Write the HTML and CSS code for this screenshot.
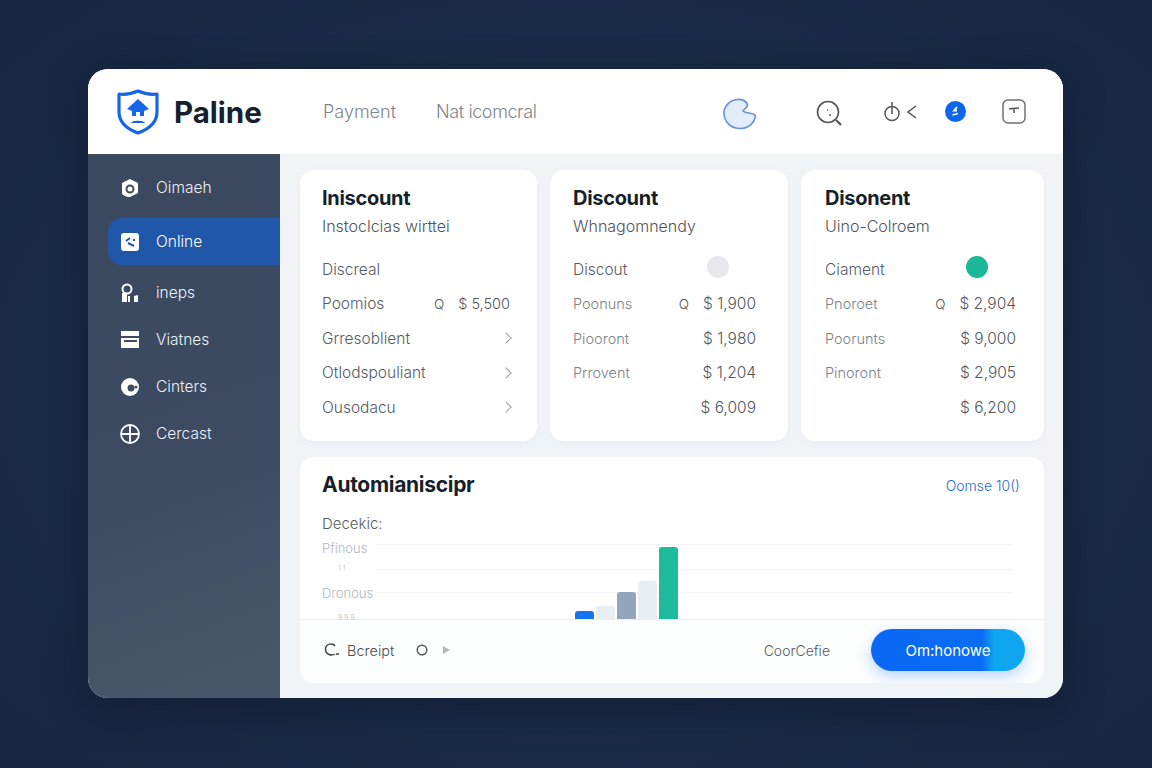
FILE: index.html
```html
<!DOCTYPE html>
<html lang="en">
<head>
    <meta charset="UTF-8">
    <meta name="viewport" content="width=device-width, initial-scale=1.0">
    <title>Paline</title>
    <link rel="stylesheet" href="styles.css">
</head>
<body>

<div class="window">
    <!-- top bar -->
    <header class="topbar">
        <svg class="logo" width="42" height="46" viewBox="0 0 42 46" fill="none">
            <path d="M21 2 C28 5 34 6 40 5 V23 C40 33 32 40 21 44 C10 40 2 33 2 23 V5 C8 6 14 5 21 2 Z" stroke="#1565e6" stroke-width="3.2" stroke-linejoin="round"/>
            <path d="M21 10 L32 20 L27 22 V27 H23 V23 H19 V27 H15 V22 L10 20 Z" fill="#1565e6"/>
            <path d="M14 34 C15 31 27 31 28 34 Z" fill="#1565e6"/>
        </svg>
        <span class="brand">Paline</span>
        <nav class="topnav">
            <a href="#">Payment</a>
            <a class="tight" href="#">Nat icomcral</a>
        </nav>
        <div class="top-icons">
            <svg class="ic-pie" width="34" height="32" viewBox="0 0 34 32">
                <path d="M14 1.500 C19 1 24 3 24.500 7.500 C24 10 21 11 20 13 C23 16 29 14 32.500 17.500 C32 25 25 30.500 17 30.500 C8 30.500 1 24 1 15 C1 8 7 2 14 1.500 Z" fill="#e3ecf9" stroke="#6a94d6" stroke-width="1.700" stroke-linejoin="round"/>
            </svg>
            <svg class="ic-search" width="28" height="26" viewBox="0 0 28 26" fill="none" stroke="#555" stroke-width="1.600">
                <circle cx="12" cy="12" r="10.500"/>
                <path d="M20 20 L25 25" stroke-width="2.200"/>
                <path d="M11 10 H12 M13 15 H15"/>
            </svg>
            <svg class="ic-power" width="34" height="22" viewBox="0 0 34 22" fill="none" stroke="#555" stroke-width="1.500">
                <circle cx="8" cy="12.500" r="7"/>
                <path d="M8 1 V13"/>
                <path d="M32 5 L24 11 L32 17"/>
            </svg>
            <svg class="ic-dot" width="21" height="21" viewBox="0 0 21 21">
                <circle cx="10.500" cy="10.500" r="10.500" fill="#0f66ea"/>
                <path d="M12 6 L9 9.500 H12 M7.500 14 L13 12.500" fill="none" stroke="#fff" stroke-width="1.800"/>
            </svg>
            <svg class="ic-box" width="24" height="25" viewBox="0 0 24 25" fill="none" stroke="#707070">
                <rect x="1" y="1" width="22" height="23" rx="5" stroke-width="1.500"/>
                <path d="M7 10 L11 9.500 L17 9 M12 9.500 V14" stroke="#555" stroke-width="1.500"/>
            </svg>
        </div>
    </header>

    <div class="body-row">
        <!-- side menu -->
        <aside class="sidebar">
            <a class="side-item" href="#">
                <svg width="20" height="20" viewBox="0 0 20 20"><path d="M10 1 L18 5 V15 L10 19 C6 19 2 17 2 15 V5 Z" fill="#fff"/><circle cx="10" cy="11" r="3.500" fill="none" stroke="#3f4d63" stroke-width="2"/></svg>
                <span>Oimaeh</span>
            </a>
            <a class="side-item active" href="#">
                <svg width="20" height="20" viewBox="0 0 20 20"><rect x="1" y="1" width="18" height="18" rx="3" fill="#fff"/><path d="M6 9 L10 6 M8 11 L14 14 M13 8 H15" stroke="#2056a8" stroke-width="2"/></svg>
                <span>Online</span>
            </a>
            <a class="side-item" href="#">
                <svg width="20" height="20" viewBox="0 0 20 20"><circle cx="7" cy="6" r="4.500" fill="none" stroke="#fff" stroke-width="2"/><path d="M2 19 V10 H7 V19 M8 19 V13 H10 V19 M14 19 V13 L18 12 V19 Z" fill="#fff"/></svg>
                <span>ineps</span>
            </a>
            <a class="side-item" href="#">
                <svg width="20" height="20" viewBox="0 0 20 20"><rect x="1" y="1" width="18" height="17" fill="#fff"/><rect x="1" y="6" width="18" height="2" fill="#3f4d63"/><rect x="4" y="10" width="13" height="2" fill="#3f4d63"/></svg>
                <span>Viatnes</span>
            </a>
            <a class="side-item" href="#">
                <svg width="20" height="20" viewBox="0 0 20 20"><circle cx="10" cy="10" r="9" fill="#fff"/><circle cx="11" cy="11" r="3.500" fill="#3f4d63"/><circle cx="16" cy="10" r="1.500" fill="#3f4d63"/></svg>
                <span>Cinters</span>
            </a>
            <a class="side-item" href="#">
                <svg width="20" height="20" viewBox="0 0 20 20" fill="none" stroke="#fff" stroke-width="1.800"><circle cx="10" cy="10" r="9"/><path d="M1 10 H19 M10 1 V19"/></svg>
                <span>Cercast</span>
            </a>
        </aside>

        <main class="content">
            <div class="cards">
                <section class="card card-first">
                    <h2>Iniscount</h2>
                    <p class="sub">Instoclcias wirttei</p>
                    <div class="row"><span>Discreal</span></div>
                    <div class="row"><span>Poomios</span><span class="q">Q</span><span class="val">$ 5,500</span></div>
                    <div class="row"><span>Grresoblient</span><i class="chev"></i></div>
                    <div class="row"><span>Otlodspouliant</span><i class="chev"></i></div>
                    <div class="row"><span>Ousodacu</span><i class="chev"></i></div>
                </section>

                <section class="card card-mid">
                    <h2>Discount</h2>
                    <p class="sub">Whnagomnendy</p>
                    <div class="row"><span>Discout</span><i class="dot grey"></i></div>
                    <div class="row faded"><span>Poonuns</span><span class="q">Q</span><span class="val">$ 1,900</span></div>
                    <div class="row faded"><span>Piooront</span><span class="val">$ 1,980</span></div>
                    <div class="row faded"><span>Prrovent</span><span class="val">$ 1,204</span></div>
                    <div class="row faded"><span></span><span class="val">$ 6,009</span></div>
                </section>

                <section class="card card-last">
                    <h2>Disonent</h2>
                    <p class="sub">Uino-Colroem</p>
                    <div class="row"><span>Ciament</span><i class="dot green"></i></div>
                    <div class="row faded"><span>Pnoroet</span><span class="q">Q</span><span class="val">$ 2,904</span></div>
                    <div class="row faded"><span>Poorunts</span><span class="val">$ 9,000</span></div>
                    <div class="row faded"><span>Pinoront</span><span class="val">$ 2,905</span></div>
                    <div class="row faded"><span></span><span class="val">$ 6,200</span></div>
                </section>
            </div>

            <section class="panel">
                <div class="panel-top">
                    <div class="panel-head">
                        <h2>Automianiscipr</h2>
                        <a href="#">Oomse 10()</a>
                    </div>
                    <p class="decek">Decekic:</p>
                    <div class="chart">
                        <div class="chart-labels">
                            <span>Pfinous</span>
                            <span class="tiny">1 1</span>
                            <span>Dronous</span>
                            <span class="tiny">9 9 9</span>
                        </div>
                        <div class="chart-lines">
                            <div class="line l1"></div>
                            <div class="line l2"></div>
                            <div class="line l3"></div>
                        </div>
                        <div class="bars">
                            <div class="bar blue" style="height: 8px"></div>
                            <div class="bar pale" style="height: 13px"></div>
                            <div class="bar slate" style="height: 27px"></div>
                            <div class="bar pale" style="height: 38px"></div>
                            <div class="bar teal" style="height: 72px"></div>
                        </div>
                    </div>
                </div>
                <div class="panel-foot">
                    <svg width="16" height="14" viewBox="0 0 16 14" fill="none" stroke="#444" stroke-width="1.500"><path d="M11 3 C9 0 2 0 1.500 6 C1.500 12 8 13 11 11 M12 11 H15"/></svg>
                    <span class="receipt">Bcreipt</span>
                    <svg class="small-o" width="12" height="12" viewBox="0 0 12 12" fill="none" stroke="#555" stroke-width="1.400"><circle cx="6" cy="6" r="4.800"/></svg>
                    <svg class="small-play" width="9" height="10" viewBox="0 0 9 10"><path d="M1 1 L8 5 L1 9 Z" fill="#b4b8bd"/></svg>
                    <span class="cancel">CoorCefie</span>
                    <button class="cta">Om:honowe</button>
                </div>
            </section>
        </main>
    </div>
</div>

</body>
</html>
```

FILE: styles.css
```css
* {
    box-sizing: border-box;
}
body {
    margin: 0;
    padding: 0 1px 1px 0;
    height: 100vh;
    overflow: hidden;
    display: flex;
    justify-content: center;
    align-items: center;
    font-family: Inter, "Liberation Sans", sans-serif;
    background: radial-gradient(ellipse at center, #1f3251 0%, #1a2b47 60%, #172641 100%);
}
a {
    color: inherit;
    text-decoration: none;
}

.window {
    width: 975px;
    height: 629px;
    border-radius: 20px;
    overflow: hidden;
    display: flex;
    flex-direction: column;
    background-color: #fff;
    box-shadow: 0 10px 40px rgba(8, 16, 32, 0.45);
}

/* top bar */
.topbar {
    height: 85px;
    flex: none;
    display: flex;
    align-items: center;
    padding-left: 29px;
    background-color: #fff;
}
.logo {
    margin-right: 15px;
}
.brand {
    width: 149px;
    font-size: 29.500px;
    font-weight: 700;
    color: #15202f;
}
.topnav {
    display: flex;
    gap: 40px;
    font-size: 18px;
    font-weight: 300;
    color: #80868d;
}
.topnav .tight {
    letter-spacing: -0.4px;
}
.top-icons {
    display: flex;
    align-items: center;
    margin-left: 187px;
}
.ic-pie {
    margin-top: 4px;
    margin-right: 59px;
}
.ic-search {
    margin-top: 2px;
    margin-right: 40px;
}
.ic-power {
    margin-right: 27px;
}
.ic-dot {
    margin-right: 36px;
}

.body-row {
    flex: 1;
    display: flex;
    min-height: 0;
}

/* side menu */
.sidebar {
    width: 192px;
    flex: none;
    padding: 10px 0 0 20px;
    background: linear-gradient(160deg, #3a4960 0%, #3c4b62 55%, #4a586d 100%);
}
.side-item {
    height: 47px;
    display: flex;
    align-items: center;
    gap: 16px;
    padding-left: 12px;
    font-size: 15.500px;
    font-weight: 300;
    color: #eef1f5;
}
.side-item.active {
    margin: 7px 0 4px;
    border-radius: 14px 0 0 14px;
    background-color: #2157a8;
    color: #fff;
}

/* main area */
.content {
    flex: 1;
    padding: 16px 19px 15px 20px;
    background-color: #f1f4f7;
    display: flex;
    flex-direction: column;
    gap: 16px;
}
.cards {
    display: grid;
    grid-template-columns: 237px 238px 243px;
    gap: 13px;
    height: 271px;
}
.card {
    padding: 16px 27px 0 22px;
    border-radius: 14px;
    background-color: #fff;
    box-shadow: 0 2px 10px rgba(120, 140, 170, 0.06);
}
.card-mid {
    padding-left: 23px;
    padding-right: 32px;
}
.card-last {
    padding-left: 24px;
    padding-right: 28px;
}
.card h2, .panel h2 {
    margin: 0;
    font-size: 20px;
    line-height: 24px;
    font-weight: 700;
    letter-spacing: -0.3px;
    color: #171f2b;
}
.sub {
    margin: 5px 0 15px;
    font-size: 16px;
    line-height: 22px;
    font-weight: 300;
    color: #4f555d;
}
.row {
    height: 34.500px;
    display: flex;
    align-items: center;
    font-size: 15.500px;
    font-weight: 300;
    color: #555b63;
}
.row.faded span:first-child {
    font-size: 14.500px;
    color: #7c8288;
}
.row span:first-child {
    margin-right: auto;
}
.q {
    margin-right: 14px;
    font-size: 13.500px;
    color: #555;
}
.val {
    color: #50565e;
}
.card-first .val {
    font-size: 14.500px;
}
.chev {
    width: 8px;
    height: 8px;
    border-top: 1.300px solid #9aa0a6;
    border-right: 1.300px solid #9aa0a6;
    transform: rotate(45deg);
}
.dot {
    width: 22px;
    height: 22px;
    margin: -4px 27px 0 0;
    border-radius: 50%;
}
.dot.grey {
    background-color: #e6e8ec;
}
.dot.green {
    margin-right: 28px;
    background-color: #1bb99a;
}

/* lower panel */
.panel {
    flex: 1;
    display: flex;
    flex-direction: column;
    border-radius: 14px;
    overflow: hidden;
    background-color: #fff;
}
.panel-top {
    height: 163px;
    flex: none;
    padding: 16px 32px 0 22px;
    border-bottom: 1px solid #e9edf1;
}
.panel-head {
    display: flex;
    justify-content: space-between;
    align-items: center;
    margin-right: -8px;
    font-size: 14px;
    font-weight: 300;
    color: #1a6fd0;
}
.panel h2 {
    font-size: 21px;
}
.decek {
    margin: 17px 0 10px;
    font-size: 15px;
    line-height: 20px;
    font-weight: 300;
    color: #555b63;
}
.chart {
    position: relative;
    height: 75px;
    display: flex;
}
.chart-labels {
    width: 54px;
    height: 75px;
    flex: none;
    display: flex;
    flex-direction: column;
    margin-top: -4px;
    font-size: 13px;
    font-weight: 300;
    line-height: 16px;
    color: #b3b7bc;
}
.chart-labels .tiny {
    margin: 8px 0 12px;
    padding-left: 16px;
    font-size: 7px;
    line-height: 9px;
}
.chart-labels .tiny:last-child {
    margin: 12px 0 0;
}
.chart-lines {
    flex: 1;
}
.line {
    border-top: 1px solid #f1f3f5;
}
.l1 {
    height: 25px;
}
.l2 {
    height: 23px;
}
.l3 {
    height: 27px;
}
.bars {
    position: absolute;
    left: 253px;
    bottom: 0;
    display: flex;
    align-items: flex-end;
    gap: 2px;
}
.bar {
    width: 19px;
    border-radius: 3px 3px 0 0;
}
.bar.blue {
    background-color: #1573ee;
}
.bar.pale {
    background-color: #e9eef2;
}
.bar.slate {
    background-color: #94a5be;
}
.bar.teal {
    background-color: #1bbb9b;
}

.panel-foot {
    flex: 1;
    display: flex;
    align-items: center;
    padding: 0 19px 3px 24px;
    background-color: #fcfdfd;
}
.receipt {
    margin-left: 7px;
    font-size: 14.500px;
    font-weight: 300;
    color: #474d55;
}
.small-o {
    margin-left: 22px;
}
.small-play {
    margin-left: 14px;
}
.cancel {
    margin-left: auto;
    margin-right: 41px;
    font-size: 14px;
    font-weight: 300;
    color: #555b63;
}
.cta {
    width: 154px;
    height: 42px;
    border: none;
    border-radius: 21px;
    font-family: inherit;
    font-size: 15px;
    color: #fff;
    cursor: pointer;
    background: linear-gradient(90deg, #0a68f4 0%, #0a6cf4 72%, #0ea6ee 80%, #0ea6ee 100%);
    box-shadow: 0 5px 14px rgba(20, 120, 240, 0.3);
}
```
